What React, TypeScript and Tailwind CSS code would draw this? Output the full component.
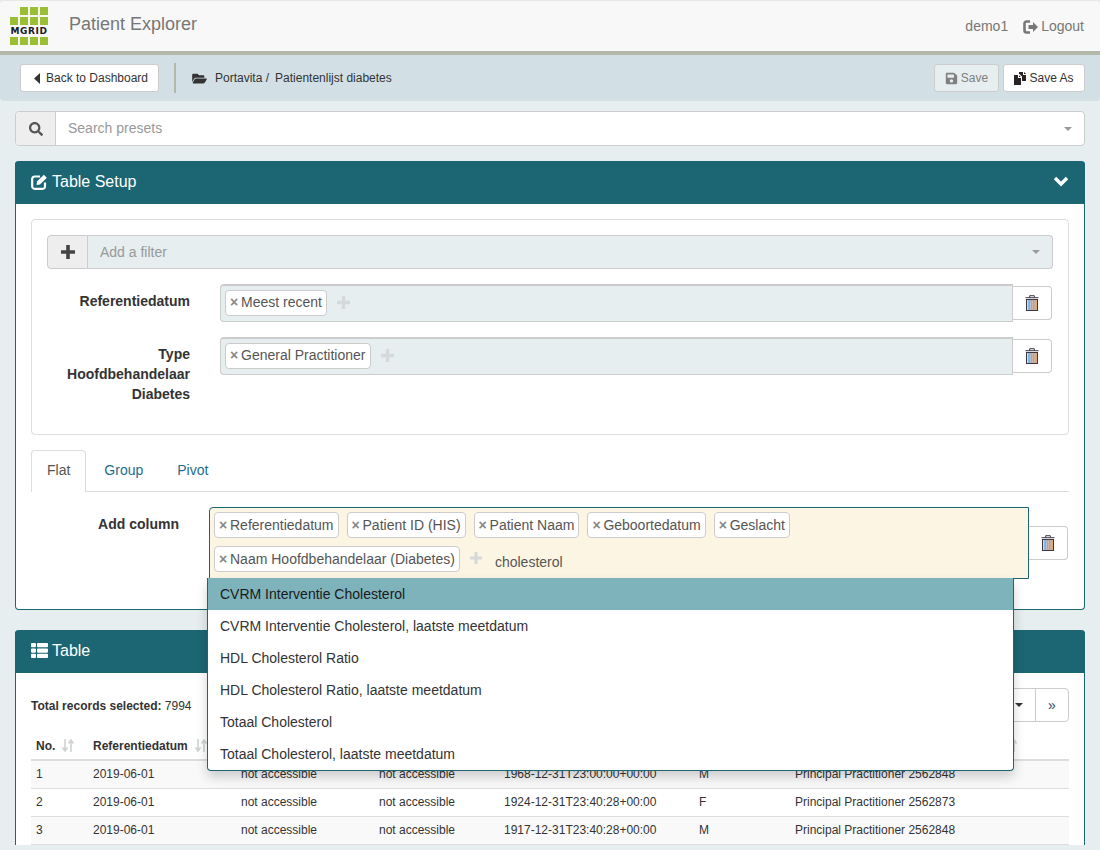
import { FaFolderOpen, FaSave, FaSearch, FaThList } from "react-icons/fa"

const rows = [
  ["1", "2019-06-01", "not accessible", "not accessible", "1968-12-31T23:00:00+00:00", "M", "Principal Practitioner 2562848"],
  ["2", "2019-06-01", "not accessible", "not accessible", "1924-12-31T23:40:28+00:00", "F", "Principal Practitioner 2562873"],
  ["3", "2019-06-01", "not accessible", "not accessible", "1917-12-31T23:40:28+00:00", "M", "Principal Practitioner 2562848"],
]

const headers = ["No.", "Referentiedatum", "Patient ID (HIS)", "Patient Naam", "Geboortedatum", "Geslacht", "Naam Hoofdbehandelaar (Diabetes)"]

const options = [
  "CVRM Interventie Cholesterol",
  "CVRM Interventie Cholesterol, laatste meetdatum",
  "HDL Cholesterol Ratio",
  "HDL Cholesterol Ratio, laatste meetdatum",
  "Totaal Cholesterol",
  "Totaal Cholesterol, laatste meetdatum",
]

function Logo() {
  const cell = "w-[8px] h-[8px] bg-[#9bbf32]"
  return (
    <div className="mt-[2px] w-[38px] h-[38px] flex flex-col gap-[2px]">
      <div className="flex gap-[2px] justify-end">
        <div className={cell} />
        <div className={cell} />
        <div className={cell} />
      </div>
      <div className="flex gap-[2px]">
        <div className={cell} />
        <div className={cell} />
        <div className={cell} />
        <div className={cell} />
      </div>
      <div className="h-[8px] flex items-center justify-center text-[9px] leading-[8px] font-bold tracking-[0.6px] text-[#1a1a1a] font-['DejaVu_Sans',sans-serif]">
        MGRID
      </div>
      <div className="flex gap-[2px]">
        <div className={cell} />
        <div className={cell} />
        <div className={cell} />
        <div className={cell} />
      </div>
    </div>
  )
}

function Caret({ className }: { className: string }) {
  return (
    <svg width="8" height="4" viewBox="0 0 8 4" className={className}>
      <path d="M0 0h8L4 4z" fill="currentColor" />
    </svg>
  )
}

function PlusIcon({ size, color }: { size: number; color: string }) {
  return (
    <svg width={size} height={size} viewBox="0 0 14 14">
      <path d="M5.2 0h3.6v5.2H14v3.6H8.8V14H5.2V8.8H0V5.2h5.2z" fill={color} />
    </svg>
  )
}

function Trash() {
  return (
    <svg width="14" height="16" viewBox="0 0 14 16">
      <path d="M0.5 2.7h13M4.7 2.5V0.7h4.6v1.8" fill="none" stroke="#3a3644" strokeWidth="1" />
      <rect x="1.5" y="4.5" width="11" height="11" fill="#fff" stroke="#3a3644" strokeWidth="1" />
      <rect x="2.5" y="5" width="2" height="10" fill="#8dbbe4" />
      <rect x="4.5" y="5" width="1" height="10" fill="#6f7486" />
      <rect x="5.5" y="5" width="1" height="10" fill="#a9c6e4" />
      <rect x="6.5" y="5" width="1" height="10" fill="#6f7486" />
      <rect x="7.5" y="5" width="1" height="10" fill="#e0b48c" />
      <rect x="8.5" y="5" width="1" height="10" fill="#6f7486" />
      <rect x="9.5" y="5" width="2.5" height="10" fill="#e2a878" />
    </svg>
  )
}

function LogoutIcon() {
  return (
    <svg width="15" height="14" viewBox="0 0 15 14">
      <path d="M7 1.5H3.5A2 2 0 0 0 1.5 3.5v7a2 2 0 0 0 2 2H7" fill="none" stroke="#777" strokeWidth="2.6" />
      <path d="M5.5 5h4.5V2l5 5-5 5V9H5.5z" fill="#777" />
    </svg>
  )
}

function SaveAsIcon() {
  return (
    <svg width="13" height="13" viewBox="0 0 13 13">
      <path d="M0 3h4v3h3v7H0z" fill="#2a2428" />
      <path d="M5 3.2L6.8 5H5z" fill="#2a2428" />
      <path d="M5 0h4v3h3v6H8V4.5L5.5 2H5z" fill="#2a2428" />
      <path d="M10 0l2 2h-2z" fill="#2a2428" />
    </svg>
  )
}

function EditIcon() {
  return (
    <svg width="17" height="16" viewBox="0 0 17 16">
      <path d="M9 2.5H4A2.5 2.5 0 0 0 1.2 5v7.5A2.5 2.5 0 0 0 4 14.8h7.5A2.5 2.5 0 0 0 14 12.5V8.5" fill="none" stroke="#fff" strokeWidth="2.2" />
      <path d="M6 7.5L12.8 0.8l3 3L9 10.5l-3.5.5z" fill="#fff" />
    </svg>
  )
}

function ChevronIcon() {
  return (
    <svg width="16" height="11" viewBox="0 0 16 11">
      <path d="M2 2l6 6 6-6" fill="none" stroke="#fff" strokeWidth="3.4" />
    </svg>
  )
}

function SortIcon() {
  return (
    <svg width="12" height="13" viewBox="0 0 12 13" className="inline-block ml-[7px] align-[-2px]">
      <path d="M3 0v11M0.5 8.5L3 12l2.5-3.5M9 13V2M6.5 4.5L9 1l2.5 3.5" fill="none" stroke="#cfd2d4" strokeWidth="1.6" />
    </svg>
  )
}

function Tag({ label }: { label: string }) {
  return (
    <span className="inline-flex items-center h-[26px] pl-[4px] pr-[4px] bg-white border border-[#ccc] rounded-[4px] text-[14px] text-[#555] whitespace-nowrap">
      <span className="w-[11px] text-[#888] font-bold text-[14px]">×</span>
      {label}
    </span>
  )
}

function TrashButton({ className }: { className: string }) {
  return (
    <button className={`w-[39px] h-[34px] flex items-center justify-center bg-white border border-[#ccc] border-l-0 rounded-r-[4px] ${className}`}>
      <Trash />
    </button>
  )
}

function FilterRow({ label, value }: { label: string; value: string }) {
  return (
    <div className="flex mb-[15px]">
      <label className="w-[143px] mr-[30px] pt-[7px] text-right text-[14px] leading-[20px] font-bold text-[#333]">{label}</label>
      <div className="w-[793px] h-[38px] flex items-center pl-[4px] pb-[2px] gap-[10px] bg-[#e6eef0] border border-[#ccc] border-t-2 rounded-l-[4px]">
        <Tag label={value} />
        <PlusIcon size={13} color="#d5d9da" />
      </div>
      <TrashButton className="mt-[2px]" />
    </div>
  )
}

function PanelHeading({ icon, title, right }: { icon: React.ReactNode; title: string; right?: React.ReactNode }) {
  return (
    <div className="h-[43px] flex items-center justify-between px-[16px] pb-[2px] bg-[#1c6674] text-white text-[16px]">
      <div className="flex items-center gap-[4px]">
        {icon}
        <span>{title}</span>
      </div>
      {right}
    </div>
  )
}

export default function App() {
  return (
    <div className="h-[850px] overflow-hidden bg-[#e6eef0] font-['Liberation_Sans',sans-serif] text-[14px] text-[#333]">
      <nav className="h-[55px] flex items-center justify-between pl-[10px] pr-[16px] pb-[3px] bg-[#f8f8f8] border-t border-[#e7e7e7] border-b-4 border-b-[#b3b8a8] rounded-t-[4px]">
        <div className="flex items-center">
          <Logo />
          <span className="ml-[21px] text-[18px] text-[#777]">Patient Explorer</span>
        </div>
        <div className="flex items-center pt-[4px] text-[#777]">
          <span>demo1</span>
          <span className="ml-[15px] flex items-center gap-[3px]">
            <LogoutIcon />
            Logout
          </span>
        </div>
      </nav>

      <div className="h-[46px] flex items-center pl-[20px] pr-[15px] bg-[#d2e0e5] rounded-b-[4px] text-[12px]">
        <button className="w-[139px] h-[28px] pl-[3px] flex items-center justify-center gap-[6px] bg-white border border-[#ccc] rounded-[3px] text-[12px] text-[#333]">
          <svg width="6" height="11" viewBox="0 0 6 11"><path d="M6 0v11L0 5.5z" fill="#333" /></svg>
          Back to Dashboard
        </button>
        <div className="w-[2px] h-[30px] ml-[15px] bg-[#b3b8a8]" />
        <FaFolderOpen className="ml-[16px] w-[15px] h-[13px] text-[#333]" />
        <span className="ml-[8px] text-[#333]">Portavita /</span>
        <span className="ml-[6px] text-[#333]">Patientenlijst diabetes</span>
        <button className="ml-auto w-[65px] h-[28px] flex items-center justify-center gap-[3px] bg-[#e6eef0] border border-[#ccc] rounded-[3px] text-[12px] text-[#808080]">
          <FaSave className="w-[13px] h-[13px]" />
          Save
        </button>
        <button className="ml-[4px] w-[82px] h-[28px] flex items-center justify-center gap-[2px] bg-white border border-[#ccc] rounded-[3px] text-[12px] text-[#333]">
          <SaveAsIcon />
          Save As
        </button>
      </div>

      <div className="mt-[10px] mx-[15px] h-[35px] flex border border-[#ccc] rounded-[4px] bg-white">
        <div className="w-[40px] flex items-center justify-center bg-[#eee] border-r border-[#ccc] rounded-l-[4px]">
          <FaSearch className="w-[14px] h-[14px] text-[#555]" />
        </div>
        <div className="flex-1 flex items-center justify-between px-[12px] text-[#999]">
          Search presets
          <Caret className="text-[#999]" />
        </div>
      </div>

      <section className="mt-[15px] mx-[15px] h-[449px] bg-white border border-[#1c6674] border-t-0 rounded-[4px]">
        <div className="-mx-px rounded-t-[4px] overflow-hidden">
          <PanelHeading icon={<EditIcon />} title="Table Setup" right={<ChevronIcon />} />
        </div>
        <div className="p-[15px]">
          <div className="h-[216px] px-[15px] pt-[15px] border border-[#ddd] rounded-[4px]">
            <div className="w-[1006px] h-[34px] flex mb-[15px]">
              <div className="w-[41px] flex items-center justify-center bg-[#eee] border border-[#ccc] rounded-l-[4px]">
                <PlusIcon size={14} color="#444" />
              </div>
              <div className="flex-1 flex items-center justify-between px-[12px] bg-[#e6eef0] border border-l-0 border-[#ccc] rounded-r-[4px] text-[#999]">
                Add a filter
                <Caret className="text-[#999]" />
              </div>
            </div>
            <FilterRow label="Referentiedatum" value="Meest recent" />
            <FilterRow label="Type Hoofdbehandelaar Diabetes" value="General Practitioner" />
          </div>

          <div className="mt-[15px] h-[42px] flex border-b border-[#ddd]">
            <div className="h-[42px] px-[15px] pb-[2px] flex items-center bg-white border border-[#ddd] border-b-0 rounded-t-[4px] text-[#555]">Flat</div>
            <div className="ml-[3px] h-[41px] px-[15px] pb-[1px] flex items-center text-[#1c6e8c]">Group</div>
            <div className="ml-[4px] h-[41px] px-[15px] pb-[1px] flex items-center text-[#1c6e8c]">Pivot</div>
          </div>

          <div className="mt-[15px] flex">
            <label className="w-[148px] mr-[30px] pt-[7px] text-right leading-[20px] font-bold text-[#333]">Add column</label>
            <div className="relative w-[820px] h-[72px] bg-[#fdf5e3] border border-[#1c6674] rounded-tl-[4px] pt-[4px] pl-[4px]">
              <div className="flex gap-[8px] mb-[8px]">
                <Tag label="Referentiedatum" />
                <Tag label="Patient ID (HIS)" />
                <Tag label="Patient Naam" />
                <Tag label="Geboortedatum" />
                <Tag label="Geslacht" />
              </div>
              <div className="flex items-start">
                <Tag label="Naam Hoofdbehandelaar (Diabetes)" />
                <span className="ml-[10px] mt-[6px]"><PlusIcon size={12} color="#d5d9da" /></span>
                <span className="ml-[13px] mt-[6px] text-[#555]">cholesterol</span>
              </div>
              <ul className="absolute left-[-3px] top-[70px] z-10 w-[807px] bg-white border border-[#1c6674] border-t-0 rounded-b-[4px] shadow-[0_6px_12px_rgba(0,0,0,0.18)] text-[14px]">
                {options.map((o, i) => (
                  <li key={o} className={`h-[32px] flex items-center pl-[12px] ${i === 0 ? "bg-[#7fb3bc] text-[#1a1a1a]" : "text-[#333]"}`}>
                    {o}
                  </li>
                ))}
              </ul>
            </div>
            <TrashButton className="mt-[19px]" />
          </div>
        </div>
      </section>

      <section className="mt-[20px] mx-[15px] bg-white border-x border-[#1c6674] rounded-t-[4px]">
        <div className="-mx-px rounded-t-[4px] overflow-hidden">
          <PanelHeading icon={<FaThList className="w-[17px] h-[17px]" />} title="Table" />
        </div>
        <div className="px-[15px] pt-[15px]">
          <div className="h-[34px] flex items-center justify-between">
            <div className="pt-[2px] text-[12px] text-[#333]">
              <b>Total records selected:</b> 7994
            </div>
            <div className="h-[34px] flex border border-[#ccc] rounded-[4px] text-[14px] text-[#2c4560]">
              <div className="w-[34px] flex items-center justify-center border-r border-[#ccc]">
                <Caret className="text-[#333]" />
              </div>
              <div className="w-[32px] flex items-center justify-center">»</div>
            </div>
          </div>
          <table className="mt-[10px] w-[1038px] table-fixed border-collapse text-[12px] text-[#333]">
            <colgroup>
              <col className="w-[57px]" />
              <col className="w-[148px]" />
              <col className="w-[138px]" />
              <col className="w-[125px]" />
              <col className="w-[195px]" />
              <col className="w-[96px]" />
              <col className="w-[279px]" />
            </colgroup>
            <thead>
              <tr className="h-[28px] border-b-2 border-[#ddd]">
                {headers.map((h) => (
                  <th key={h} className="px-[5px] text-left font-bold whitespace-nowrap">
                    {h}
                    <SortIcon />
                  </th>
                ))}
              </tr>
            </thead>
            <tbody>
              {rows.map((r, i) => (
                <tr key={r[0]} className={`h-[28px] border-b border-[#ddd] ${i % 2 === 0 ? "bg-[#f9f9f9]" : "bg-white"}`}>
                  {r.map((c, j) => (
                    <td key={j} className="px-[5px]">{c}</td>
                  ))}
                </tr>
              ))}
            </tbody>
          </table>
        </div>
      </section>
    </div>
  )
}
